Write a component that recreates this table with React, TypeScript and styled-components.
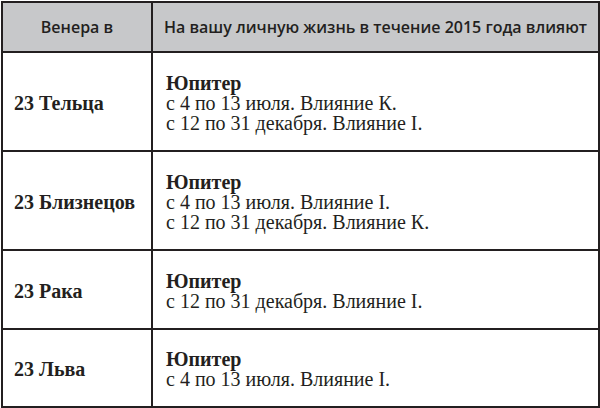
import { createGlobalStyle } from "styled-components";
import styled from "styled-components";

const GlobalStyle = createGlobalStyle`
  html, body { margin: 0; padding: 0; background: #ffffff; }
  #root { width: 600px; height: 408px; }
`;

const Table = styled.div`
  box-sizing: border-box;
  width: 599px;
  margin: 1px 0 0 1px;
  display: grid;
  grid-template-columns: 150px 1fr;
  grid-template-rows: 50px 99px 99px 79px 78px;
  border-top: 2px solid #231f20;
  border-left: 2px solid #231f20;
`;

const HeadCell = styled.div`
  box-sizing: border-box;
  background: #c7c8ca;
  border-right: 2px solid #231f20;
  border-bottom: 2px solid #231f20;
  display: flex;
  align-items: center;
  justify-content: center;
  font-family: "Open Sans", "Noto Sans", sans-serif;
  font-weight: 600;
  font-size: 16px;
  color: #231f20;
`;

const Cell = styled.div<{ $label?: boolean }>`
  box-sizing: border-box;
  border-right: 2px solid #231f20;
  border-bottom: 2px solid #231f20;
  display: flex;
  flex-direction: column;
  justify-content: center;
  padding-left: ${(p) => (p.$label ? "11px" : "13px")};
  padding-top: 2px;
  font-family: "Liberation Serif", "DejaVu Serif", serif;
  font-size: 20px;
  line-height: 20px;
  color: #231f20;
  font-weight: ${(p) => (p.$label ? 700 : 400)};
`;

const Planet = styled.div`
  font-weight: 700;
`;

const rows = [
  { sign: "23 Тельца", lines: ["с 4 по 13 июля. Влияние К.", "с 12 по 31 декабря. Влияние I."] },
  { sign: "23 Близнецов", lines: ["с 4 по 13 июля. Влияние I.", "с 12 по 31 декабря. Влияние К."] },
  { sign: "23 Рака", lines: ["с 12 по 31 декабря. Влияние I."] },
  { sign: "23 Льва", lines: ["с 4 по 13 июля. Влияние I."] },
];

export default function App() {
  return (
    <>
      <GlobalStyle />
      <Table>
        <HeadCell>Венера в</HeadCell>
        <HeadCell>На вашу личную жизнь в течение 2015 года влияют</HeadCell>
        {rows.map((r) => (
          <>
            <Cell $label key={r.sign}>{r.sign}</Cell>
            <Cell key={r.sign + "-i"}>
              <Planet>Юпитер</Planet>
              {r.lines.map((l) => (
                <div key={l}>{l}</div>
              ))}
            </Cell>
          </>
        ))}
      </Table>
    </>
  );
}
